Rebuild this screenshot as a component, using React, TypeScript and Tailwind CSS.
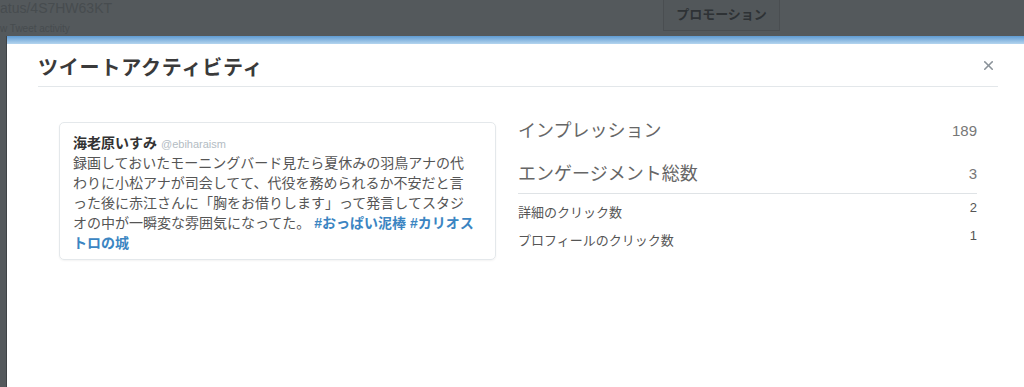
import { X } from "lucide-react";

const tweetLines = [
  "録画しておいたモーニングバード見たら夏休みの羽鳥アナの代",
  "わりに小松アナが司会してて、代役を務められるか不安だと言",
  "った後に赤江さんに「胸をお借りします」って発言してスタジ",
];

const App = () => {
  return (
    <div className="w-[1024px] h-[387px] overflow-hidden bg-[#54595c] flex flex-col font-['Liberation_Sans','Noto_Sans_CJK_JP',sans-serif]">
      {/* backdrop behind the modal */}
      <div className="h-[36px] flex shrink-0">
        <div className="w-[300px] text-[#474c4f] leading-none">
          <div className="text-[14px] pt-[1px]">atus/4S7HW63KT</div>
          <div className="text-[10px] mt-[9px]">w Tweet activity</div>
        </div>
        <div className="ml-[363px] w-[117px] h-[33px] -mt-[2px] border border-[#4a4e51] bg-[#52575a] flex items-center justify-center text-[13px] font-semibold text-[#2e3235]">
          プロモーション
        </div>
      </div>

      {/* modal */}
      <div className="flex-1 ml-[6px] bg-white flex flex-col border-l border-[#3f4346]">
        <div className="h-[8px] bg-linear-to-b from-[#5f9bd2] to-[#b4d5ef]" />
        <div className="pl-[31px] w-[991px]">
          <div className="flex items-center justify-between pt-[12px] pb-[6px] border-b border-[#e3e7ea]">
            <h1 className="text-[20px] leading-[24px] font-semibold tracking-[0.8px] text-[#3a3a3a]">ツイートアクティビティ</h1>
            <X className="w-[15px] h-[15px] mr-[2px] -mt-[6px] text-[#8a9299]" strokeWidth={2.5} />
          </div>

          <div className="flex items-start px-[21px] mt-[31px]">
            <div className="w-[437px] mt-[4px] border border-[#e4e8eb] rounded-[5px] shadow-[0_1px_2px_rgba(0,0,0,0.05)] pl-[13px] pr-[10px] pt-[11px] pb-[6px]">
              <div className="leading-[18px] flex items-baseline gap-[4px]">
                <span className="text-[14px] font-bold text-[#333]">海老原いすみ</span>
                <span className="text-[11px] text-[#b3bcc3]">@ebiharaism</span>
              </div>
              <p className="text-[14px] leading-[20px] text-[#555]">
                {tweetLines.map((l) => (
                  <span key={l}>
                    {l}
                    <br />
                  </span>
                ))}
                オの中が一瞬変な雰囲気になってた。{" "}
                <span className="text-[#3b85c2] font-semibold">#おっぱい泥棒 #カリオス</span>
                <br />
                <span className="text-[#3b85c2] font-semibold">トロの城</span>
              </p>
            </div>

            <div className="flex-1 ml-[22px] text-[#666]">
              <div className="flex justify-between items-center leading-[26px]">
                <span className="text-[18px]">インプレッション</span>
                <span className="text-[15px] text-[#777]">189</span>
              </div>
              <div className="flex justify-between items-center leading-[26px] mt-[17px] pb-[6px] border-b border-[#dfe3e6]">
                <span className="text-[18px]">エンゲージメント総数</span>
                <span className="text-[15px] text-[#777]">3</span>
              </div>
              <div className="flex justify-between items-start leading-[20px] mt-[9px]">
                <span className="text-[13px] text-[#555]">詳細のクリック数</span>
                <span className="text-[13px] text-[#555] -mt-[5px]">2</span>
              </div>
              <div className="flex justify-between items-start leading-[20px] mt-[8px]">
                <span className="text-[13px] text-[#555]">プロフィールのクリック数</span>
                <span className="text-[13px] text-[#555] -mt-[5px]">1</span>
              </div>
            </div>
          </div>
        </div>
      </div>
    </div>
  );
};

export default App;
